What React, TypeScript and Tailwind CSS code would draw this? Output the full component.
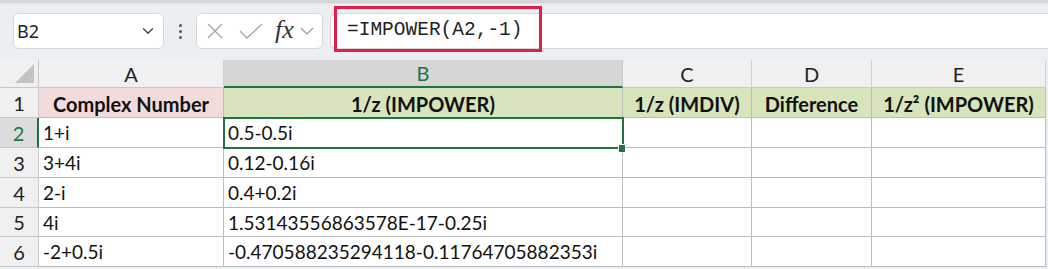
import { ChevronDown } from 'lucide-react';

const COLS = ['A', 'B', 'C', 'D', 'E'];

const HEAD = ['Complex Number', '1/z (IMPOWER)', '1/z (IMDIV)', 'Difference', '1/z² (IMPOWER)'];

const DATA: string[][] = [
  ['1+i', '0.5-0.5i'],
  ['3+4i', '0.12-0.16i'],
  ['2-i', '0.4+0.2i'],
  ['4i', '1.53143556863578E-17-0.25i'],
  ['-2+0.5i', '-0.470588235294118-0.11764705882353i'],
];

const grid = "font-['Lato','Liberation_Sans',sans-serif]";

export default function App() {
  return (
    <div className="w-[1048px] h-[269px] bg-[#eceff2] overflow-hidden relative">
      {/* ribbon edge */}
      <div className="h-[3px] bg-[#d3d6d9]" />
      <div className="h-[1px] bg-[#e2e5e8]" />

      {/* Formula bar */}
      <div className="flex items-center h-[36px] mt-[9px] pl-[13px]">
        <div className="w-[151px] h-full bg-white border border-[#d6d6d6] rounded-[6px] flex items-center justify-between pl-[3px] pr-[6px]">
          <span className="text-[18px] text-[#222] font-['Noto_Sans',sans-serif]">B2</span>
          <ChevronDown size={18} strokeWidth={1.8} className="text-[#444]" />
        </div>
        <div className="w-[32px] flex flex-col items-center gap-[3px]">
          <span className="w-[3px] h-[3px] rounded-full bg-[#555]" />
          <span className="w-[3px] h-[3px] rounded-full bg-[#555]" />
          <span className="w-[3px] h-[3px] rounded-full bg-[#555]" />
        </div>
        <div className="w-[127px] h-full bg-white border border-[#d6d6d6] rounded-[6px] flex items-center pl-[8px]">
          <svg width="20" height="20" viewBox="0 0 20 20" className="mr-[13px]">
            <path d="M3 3 L17 17 M17 3 L3 17" stroke="#a3a3a3" strokeWidth="1.3" fill="none" />
          </svg>
          <svg width="26" height="20" viewBox="0 0 26 20" className="mr-[11px]">
            <path d="M2 10 L9 17 L24 3" stroke="#a3a3a3" strokeWidth="1.3" fill="none" />
          </svg>
          <span className="text-[26px] italic text-[#333] font-['Liberation_Serif',serif] leading-none -mt-[3px]">fx</span>
          <svg width="14" height="10" viewBox="0 0 14 10" className="ml-[6px]">
            <path d="M1 2 L7 8 L13 2" stroke="#a3a3a3" strokeWidth="1.3" fill="none" />
          </svg>
        </div>
        <div className="flex-1 h-full ml-[7px] bg-white border-y border-l border-[#d6d6d6] rounded-l-[6px] flex items-center pl-[16px]">
          <span className="text-[19.5px] text-[#222] font-['Liberation_Mono',monospace]">=IMPOWER(A2,-1)</span>
        </div>
      </div>

      {/* highlight around the formula */}
      <div className="absolute left-[334px] top-[6px] w-[208px] h-[46px] border-[3px] border-[#e01f4a]" />

      {/* Sheet */}
      <div className={`relative mt-[11px] ${grid} text-[19px] text-[#111]`}>
        <div className="grid grid-cols-[39px_185px_399px_129px_120px_174px] grid-rows-[28px_30px_30px_30px_30px_29px_30px]">
          {/* corner */}
          <div className="bg-[#f0f0f0] border-r border-b border-[#c8c8c8] flex items-end justify-end pr-[4px] pb-[4px]">
            <svg width="19" height="19" viewBox="0 0 19 19">
              <path d="M19 0 L19 19 L0 19 Z" fill="#c3c3c3" />
            </svg>
          </div>
          {COLS.map((c) => (
            <div
              key={c}
              className={
                c === 'B'
                  ? 'bg-[#d6d6d6] border-r border-[#c8c8c8] border-b-2 border-b-[#217346] text-[#217346] flex items-center justify-center text-[20px]'
                  : 'bg-[#f0f0f0] border-r border-b border-[#d0d0d0] border-b-[#c8c8c8] text-[#222] flex items-center justify-center text-[20px]'
              }
            >
              {c}
            </div>
          ))}

          {/* row 1 */}
          <div className="bg-[#f0f0f0] border-r border-b border-[#c8c8c8] flex items-center justify-center text-[#222] text-[20px]">1</div>
          {HEAD.map((h, i) => (
            <div
              key={h}
              className={`${i === 0 ? 'bg-[#f2dcdb]' : 'bg-[#d8e4bc]'} border-r border-b border-[#bdbdbd] flex items-center justify-center pt-[2px] font-bold text-[20px] text-[#111]`}
            >
              {h}
            </div>
          ))}

          {DATA.map((r, ri) => (
            <>
              <div
                key={`h${ri}`}
                className={
                  ri === 0
                    ? 'bg-[#dcdcdc] border-r-2 border-r-[#217346] border-b border-b-[#c8c8c8] flex items-center justify-center text-[#217346] text-[20px]'
                    : 'bg-[#f0f0f0] border-r border-b border-[#c8c8c8] flex items-center justify-center text-[#222] text-[20px]'
                }
              >
                {ri + 2}
              </div>
              {[0, 1, 2, 3, 4].map((ci) => (
                <div
                  key={`${ri}-${ci}`}
                  className="bg-white border-r border-b border-[#bdbdbd] flex items-center pl-[4px] pt-[2px] whitespace-nowrap overflow-hidden"
                >
                  {r[ci] ?? ''}
                </div>
              ))}
            </>
          ))}
        </div>

        {/* active cell B2 */}
        <div className="absolute left-[223px] top-[57px] w-[401px] h-[32px] border-2 border-[#217346] pointer-events-none" />
        <div className="absolute left-[618px] top-[84px] w-[8px] h-[9px] bg-[#217346] border border-white" />
      </div>
    </div>
  );
}
